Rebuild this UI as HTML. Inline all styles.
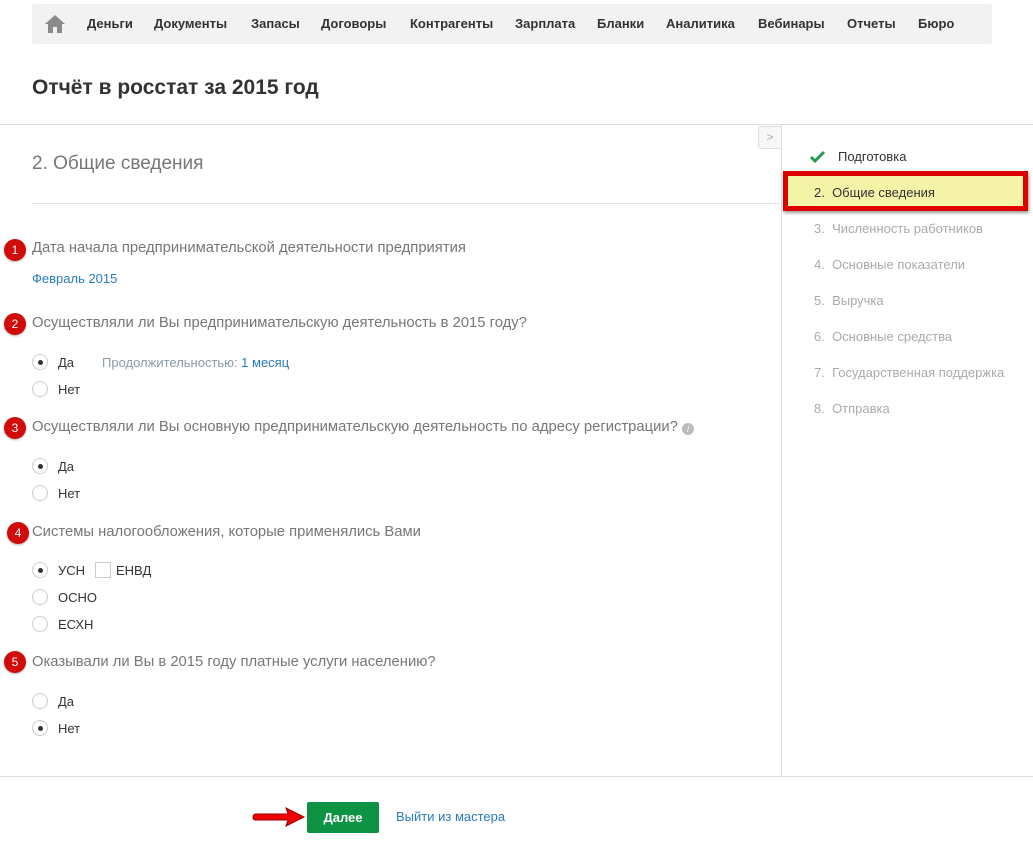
<!DOCTYPE html>
<html><head><meta charset="utf-8"><style>
body{margin:0;width:1033px;height:846px;position:relative;background:#fff;font-family:"Liberation Sans",Arial,sans-serif;overflow:hidden}
.a{position:absolute;white-space:nowrap}
.nav{left:32px;top:4px;width:960px;height:40px;background:#f2f2f2;border-radius:3px}
.nav span{position:absolute;top:12px;font-size:13px;font-weight:bold;color:#333}
.q{font-size:14.8px;color:#777}
.b{width:22px;height:22px;border-radius:50%;background:#d10a0a;color:#fff;font-size:12px;text-align:center;line-height:22px;box-shadow:0 1px 2px rgba(0,0,0,.3)}
.r{width:14px;height:14px;border:1px solid #ccc;border-radius:50%;background:#fff}
.r.on::after{content:"";position:absolute;left:5px;top:5px;width:5px;height:5px;border-radius:50%;background:#333}
.l{font-size:13px;color:#333}
.s{font-size:13px;color:#aaa}
.lk{color:#2a7ac0;font-size:13px}
</style></head><body>
<div class="a nav">
<svg style="position:absolute;left:13px;top:11px" width="20" height="18" viewBox="0 0 20 18"><path d="M10 0L0 9h3v9h5v-6h4v6h5V9h3z" fill="#8a8a8a"/></svg>
<span style="left:55px">Деньги</span><span style="left:122px">Документы</span><span style="left:219px">Запасы</span><span style="left:289px">Договоры</span><span style="left:378px">Контрагенты</span><span style="left:483px">Зарплата</span><span style="left:565px">Бланки</span><span style="left:634px">Аналитика</span><span style="left:726px">Вебинары</span><span style="left:815px">Отчеты</span><span style="left:886px">Бюро</span>
</div>
<div class="a" style="left:32px;top:76px;font-size:21px;font-weight:bold;color:#333">Отчёт в росстат за 2015 год</div>
<div class="a" style="left:0;top:124px;width:1033px;height:1px;background:#ddd"></div>
<div class="a" style="left:781px;top:124px;width:1px;height:653px;background:#ddd"></div>
<div class="a" style="left:0;top:776px;width:1033px;height:1px;background:#ddd"></div>
<div class="a" style="left:758px;top:126px;width:22px;height:21px;border:1px solid #ddd;border-right:none;border-radius:3px 0 0 3px;background:#f7f7f7;color:#aaa;font-size:12px;text-align:center;line-height:20px">&gt;</div>
<div class="a" style="left:32px;top:153px;font-size:19px;color:#777">2. Общие сведения</div>
<div class="a" style="left:32px;top:203px;width:748px;height:1px;background:#e5e5e5"></div>

<div class="a b" style="left:4px;top:239px">1</div>
<div class="a q" style="left:32px;top:240px">Дата начала предпринимательской деятельности предприятия</div>
<div class="a lk" style="left:32px;top:271px">Февраль 2015</div>

<div class="a b" style="left:4px;top:313px">2</div>
<div class="a q" style="left:32px;top:315px">Осуществляли ли Вы предпринимательскую деятельность в 2015 году?</div>
<div class="a r on" style="left:32px;top:354px"></div><div class="a l" style="left:58px;top:355px">Да</div>
<div class="a s" style="left:102px;top:355px;color:#8a9aa8">Продолжительностью: <span style="color:#2a7ac0">1 месяц</span></div>
<div class="a r" style="left:32px;top:381px"></div><div class="a l" style="left:58px;top:382px">Нет</div>

<div class="a b" style="left:4px;top:417px">3</div>
<div class="a q" style="left:32px;top:419px">Осуществляли ли Вы основную предпринимательскую деятельность по адресу регистрации? <span style="display:inline-block;width:12px;height:12px;border-radius:50%;background:#bbb;color:#fff;font-size:9px;text-align:center;line-height:12px;font-style:italic;vertical-align:-1px">i</span></div>
<div class="a r on" style="left:32px;top:458px"></div><div class="a l" style="left:58px;top:459px">Да</div>
<div class="a r" style="left:32px;top:485px"></div><div class="a l" style="left:58px;top:486px">Нет</div>

<div class="a b" style="left:7px;top:522px">4</div>
<div class="a q" style="left:32px;top:524px">Системы налогообложения, которые применялись Вами</div>
<div class="a r on" style="left:32px;top:562px"></div><div class="a l" style="left:58px;top:563px">УСН</div>
<div class="a" style="left:95px;top:562px;width:14px;height:14px;border:1px solid #ccc"></div><div class="a l" style="left:116px;top:563px">ЕНВД</div>
<div class="a r" style="left:32px;top:589px"></div><div class="a l" style="left:58px;top:590px">ОСНО</div>
<div class="a r" style="left:32px;top:616px"></div><div class="a l" style="left:58px;top:617px">ЕСХН</div>

<div class="a b" style="left:4px;top:651px">5</div>
<div class="a q" style="left:32px;top:654px">Оказывали ли Вы в 2015 году платные услуги населению?</div>
<div class="a r" style="left:32px;top:693px"></div><div class="a l" style="left:58px;top:694px">Да</div>
<div class="a r on" style="left:32px;top:720px"></div><div class="a l" style="left:58px;top:721px">Нет</div>

<svg class="a" style="left:810px;top:150px" width="16" height="13" viewBox="0 0 16 13"><path d="M1 7l4 4 9-9" stroke="#2a9a4a" stroke-width="3" fill="none"/></svg>
<div class="a l" style="left:838px;top:149px">Подготовка</div>
<div class="a" style="left:783px;top:171px;width:245px;height:40px;background:#d00;box-shadow:1px 2px 3px rgba(0,0,0,.4)"></div>
<div class="a" style="left:788px;top:176px;width:235px;height:30px;background:#f5f3a8"></div>
<div class="a l" style="left:814px;top:185px">2.&nbsp; Общие сведения</div>
<div class="a s" style="left:814px;top:221px">3.&nbsp; Численность работников</div>
<div class="a s" style="left:814px;top:257px">4.&nbsp; Основные показатели</div>
<div class="a s" style="left:814px;top:293px">5.&nbsp; Выручка</div>
<div class="a s" style="left:814px;top:329px">6.&nbsp; Основные средства</div>
<div class="a s" style="left:814px;top:365px">7.&nbsp; Государственная поддержка</div>
<div class="a s" style="left:814px;top:401px">8.&nbsp; Отправка</div>

<svg class="a" style="left:252px;top:806px" width="56" height="22" viewBox="0 0 56 22"><path d="M4 8h32l-2-6 18 9-18 9 2-6H4q-3 0-3-3t3-3z" fill="#e00" stroke="#900" stroke-width="1"/></svg>
<div class="a" style="left:307px;top:802px;width:72px;height:31px;background:#0e9344;border-radius:2px;color:#fff;font-weight:bold;font-size:13px;text-align:center;line-height:31px">Далее</div>
<div class="a lk" style="left:396px;top:809px">Выйти из мастера</div>
</body></html>
